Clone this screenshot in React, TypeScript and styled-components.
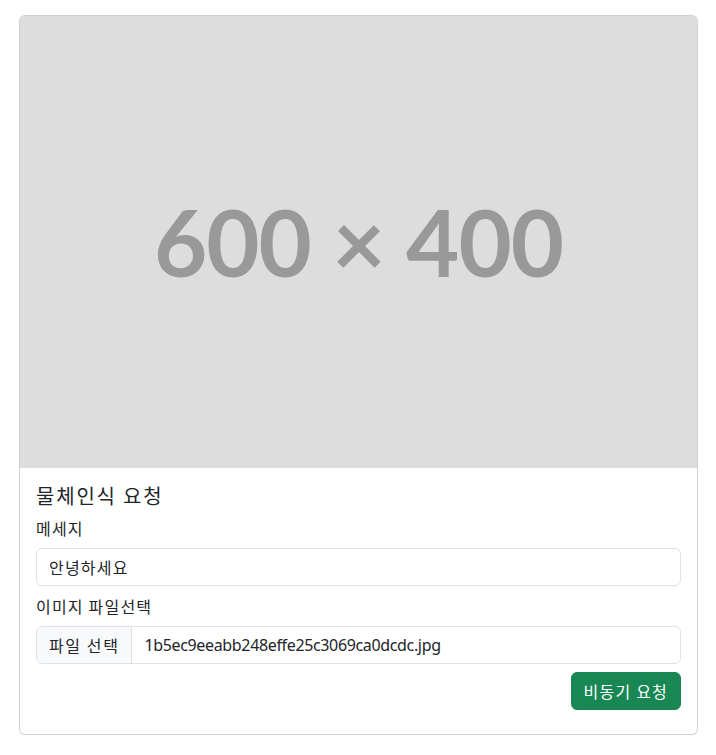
import React from 'react';
import styled, { createGlobalStyle } from 'styled-components';

const GlobalStyle = createGlobalStyle`
  html, body {
    margin: 0;
    background: #fff;
  }
  body {
    font-family: 'Noto Sans', 'Noto Sans CJK KR', sans-serif;
    font-size: 16px;
    line-height: 1.5;
    color: #212529;
  }
  * {
    box-sizing: border-box;
  }
`;

const Page = styled.div`
  padding: 15px 18px 20px 19px;
`;

const Card = styled.div`
  display: flex;
  flex-direction: column;
  border: 1px solid rgba(0, 0, 0, 0.175);
  border-radius: 6px;
  overflow: hidden;
  background: #fff;
`;

// placeholder image, 600x400 scaled to card width
const Placeholder = styled.div`
  height: 452px;
  background: #dddddd;
  display: flex;
  align-items: center;
  justify-content: center;
  color: #999999;
  font-family: Lato, 'Noto Sans', sans-serif;
  font-weight: 700;
  font-size: 92px;
  line-height: 1;
  letter-spacing: -1px;
`;

const Body = styled.div`
  padding: 16px 16px 24px;
`;

const Title = styled.h5`
  margin: 0 0 8px;
  font-family: 'Noto Sans CJK KR', sans-serif;
  font-size: 20px;
  font-weight: 400;
  line-height: 1.2;
  letter-spacing: 1.8px;
`;

const Label = styled.label`
  display: block;
  margin-bottom: 8px;
  font-family: 'Noto Sans CJK KR', sans-serif;
  font-size: 16px;
  line-height: 24px;
  letter-spacing: 1.2px;
`;

const Field = styled.div`
  margin-bottom: 8px;
`;

const TextInput = styled.input`
  display: block;
  width: 100%;
  height: 38px;
  padding: 6px 12px;
  font-family: 'Noto Sans CJK KR', sans-serif;
  font-size: 16px;
  letter-spacing: 1.2px;
  color: #212529;
  border: 1px solid #dee2e6;
  border-radius: 6px;
  outline: none;
`;

const FileBox = styled.div`
  display: flex;
  height: 38px;
  border: 1px solid #dee2e6;
  border-radius: 6px;
  overflow: hidden;
`;

const FileButton = styled.span`
  display: flex;
  align-items: center;
  padding: 0 12px;
  background: #f8f9fa;
  border-right: 1px solid #dee2e6;
  font-family: 'Noto Sans CJK KR', sans-serif;
  font-size: 16px;
  letter-spacing: 1.6px;
`;

const FileName = styled.span`
  display: flex;
  align-items: center;
  padding: 0 12px;
  font-family: 'Noto Sans', sans-serif;
  font-size: 16px;
  letter-spacing: -0.35px;
`;

const Actions = styled.div`
  display: flex;
  justify-content: flex-end;
`;

const Button = styled.button`
  height: 38px;
  padding: 6px 12px;
  font-family: 'Noto Sans CJK KR', sans-serif;
  font-size: 16px;
  line-height: 24px;
  letter-spacing: 1.2px;
  color: #fff;
  background: #198754;
  border: 1px solid #198754;
  border-radius: 6px;
  cursor: pointer;
`;

export default function App(): JSX.Element {
  return (
    <Page>
      <GlobalStyle />
      <Card>
        <Placeholder>600 × 400</Placeholder>
        <Body>
          <Title>물체인식 요청</Title>
          <Field>
            <Label htmlFor="msg">메세지</Label>
            <TextInput id="msg" defaultValue="안녕하세요" />
          </Field>
          <Field>
            <Label>이미지 파일선택</Label>
            <FileBox>
              <FileButton>파일 선택</FileButton>
              <FileName>1b5ec9eeabb248effe25c3069ca0dcdc.jpg</FileName>
            </FileBox>
          </Field>
          <Actions>
            <Button>비동기 요청</Button>
          </Actions>
        </Body>
      </Card>
    </Page>
  );
}
